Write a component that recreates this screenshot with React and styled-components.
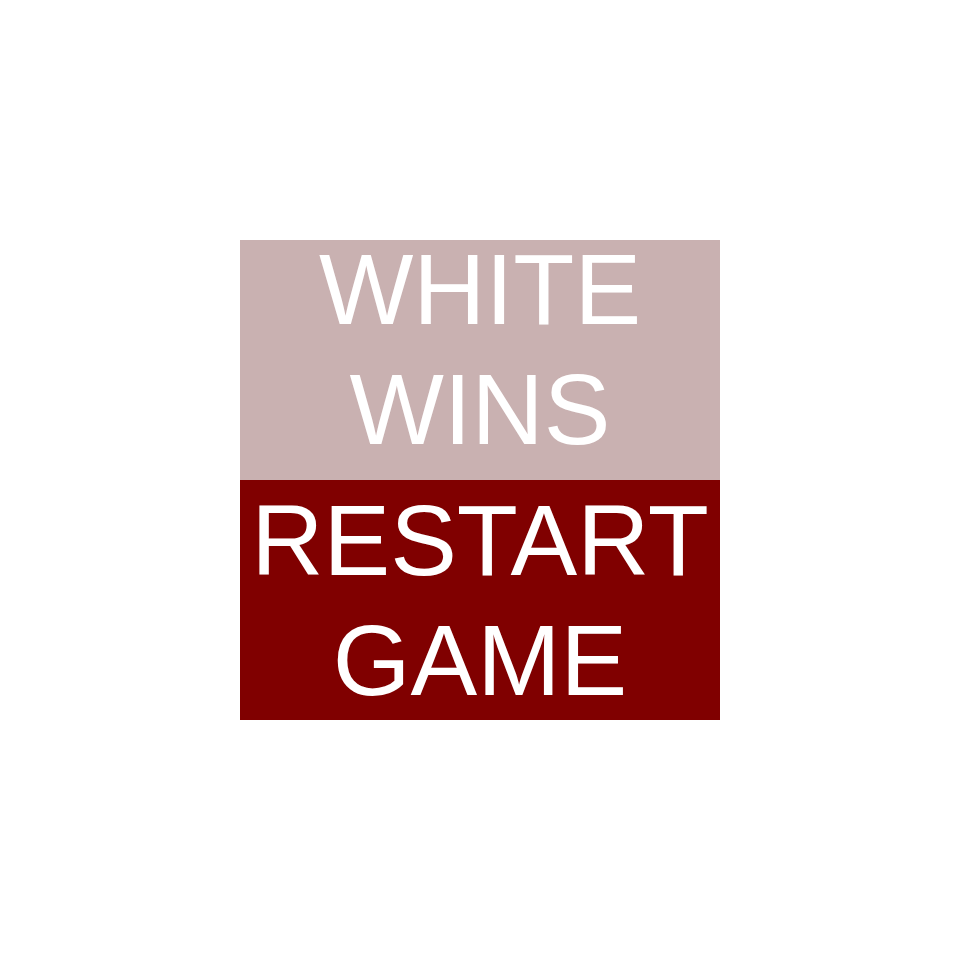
import React from "react";
import styled, { createGlobalStyle } from "styled-components";

const GlobalStyle = createGlobalStyle`
    html, body {
        margin: 0;
        padding: 0;
        background: #ffffff;
    }
    body {
        font-family: "Liberation Sans", Arial, sans-serif;
    }
`

const Screen = styled.div`
    width: 960px;
    height: 960px;
    display: flex;
    align-items: center;
    justify-content: center;
`

const Board = styled.div`
    width: 480px;
    height: 480px;
    display: flex;
    flex-flow: column nowrap;
`

const Panel = styled.div`
    height: 240px;
    box-sizing: border-box;
    padding-top: ${props => props.offset}px;
    background: ${props => props.bg};
    color: #ffffff;
    font-size: 100px;
    line-height: 120px;
    text-align: center;
    overflow: visible;
    cursor: ${props => props.clickable ? "pointer" : "default"};
`

const Line = styled.div`
    margin-top: ${props => props.shift || 0}px;
    white-space: nowrap;
`

const App = () => {
    return (
        <>
            <GlobalStyle />
            <Screen>
                <Board>
                    <Panel bg="#c9b1b1" offset={0}>
                        <Line shift={-11}>WHITE</Line>
                        <Line>WINS</Line>
                    </Panel>
                    <Panel bg="#800000" offset={0} clickable>
                        <Line>RESTART</Line>
                        <Line>GAME</Line>
                    </Panel>
                </Board>
            </Screen>
        </>
    );
};

export default App;
